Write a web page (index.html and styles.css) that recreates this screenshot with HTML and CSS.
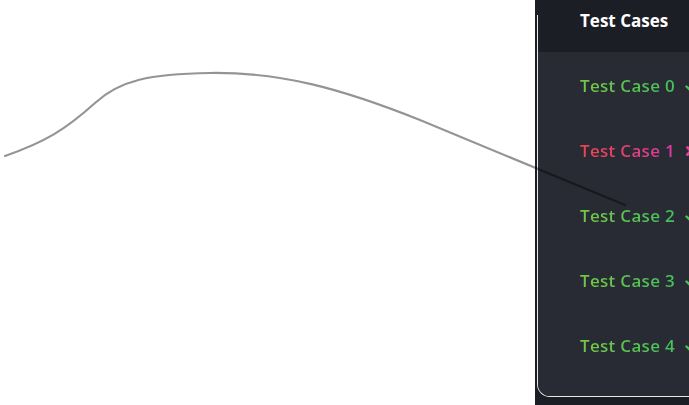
FILE: index.html
```html
<!DOCTYPE html>
<html>
<head>
<meta charset="utf-8">
<link rel="stylesheet" href="styles.css">
</head>
<body>
<div class="page">
  <div class="canvas"></div>
  <aside class="panel">
    <div class="box">
      <div class="box-head"><span class="title">Test Cases</span></div>
      <ul class="cases">
        <li class="case pass"><span class="label">Test Case 0</span><svg class="icon" viewBox="0 0 12 12"><path d="M1.5 6.5 L4.5 9.5 L10.5 2.5" fill="none" stroke="#4cc257" stroke-width="2.4" stroke-linecap="round" stroke-linejoin="round"/></svg></li>
        <li class="case fail"><span class="label">Test Case 1</span><svg class="icon" viewBox="0 0 12 12"><path d="M2.5 2.5 L9.5 9.5 M9.5 2.5 L2.5 9.5" fill="none" stroke="#e0409a" stroke-width="3" stroke-linecap="round"/></svg></li>
        <li class="case pass"><span class="label">Test Case 2</span><svg class="icon" viewBox="0 0 12 12"><path d="M1.5 6.5 L4.5 9.5 L10.5 2.5" fill="none" stroke="#4cc257" stroke-width="2.4" stroke-linecap="round" stroke-linejoin="round"/></svg></li>
        <li class="case pass"><span class="label">Test Case 3</span><svg class="icon" viewBox="0 0 12 12"><path d="M1.5 6.5 L4.5 9.5 L10.5 2.5" fill="none" stroke="#4cc257" stroke-width="2.4" stroke-linecap="round" stroke-linejoin="round"/></svg></li>
        <li class="case pass"><span class="label">Test Case 4</span><svg class="icon" viewBox="0 0 12 12"><path d="M1.5 6.5 L4.5 9.5 L10.5 2.5" fill="none" stroke="#4cc257" stroke-width="2.4" stroke-linecap="round" stroke-linejoin="round"/></svg></li>
      </ul>
    </div>
  </aside>
  <svg class="stroke" viewBox="0 0 689 405" width="689" height="405">
    <path d="M5 156 C 45 142, 65 130, 95 103 C 120 80, 150 74, 210 73 C 280 72, 340 88, 420 120 L 625 205" fill="none" stroke="rgba(0,0,0,0.42)" stroke-width="2.2" stroke-linecap="round"/>
  </svg>
</div>
</body>
</html>
```

FILE: styles.css
```css
html, body {
  margin: 0;
  padding: 0;
  background: #ffffff;
  overflow: hidden;
}
body {
  font-family: "Open Sans", "Lato", sans-serif;
}
.page {
  position: relative;
  width: 689px;
  height: 405px;
  display: flex;
  overflow: hidden;
}
.canvas {
  width: 535px;
  flex: none;
  background: #ffffff;
}
.panel {
  width: 220px;
  flex: none;
  background: #1c1e26;
  padding: 15px 0 8px 2px;
  box-sizing: border-box;
  display: flex;
}
.box {
  flex: 1;
  display: flex;
  flex-direction: column;
  border-left: 1px solid #e9e9ec;
  border-bottom: 1px solid #e9e9ec;
  border-bottom-left-radius: 13px;
}
.box-head {
  height: 37px;
  flex: none;
  background: #1c1e26;
  padding-left: 42px;
  box-sizing: border-box;
}
.title {
  display: block;
  margin-top: -4px;
  color: #ffffff;
  font-weight: 700;
  font-size: 17px;
  line-height: 20px;
  letter-spacing: 0;
}
.cases {
  list-style: none;
  margin: 0;
  padding: 0 0 0 42px;
  flex: 1;
  background: #282b33;
  border-bottom-left-radius: 12px;
}
.case {
  height: 65px;
  display: flex;
  align-items: center;
  gap: 10px;
}
.label {
  font-size: 17px;
  font-weight: 600;
  line-height: 20px;
  letter-spacing: 0.3px;
  margin-top: 2px;
  -webkit-background-clip: text;
  background-clip: text;
  color: transparent;
}
.pass .label {
  background-image: linear-gradient(90deg, #74c845, #44c05c);
}
.fail .label {
  background-image: linear-gradient(90deg, #e8474a, #db3aa3);
}
.icon {
  width: 12px;
  height: 12px;
  flex: none;
  margin-top: 2px;
}
.stroke {
  position: absolute;
  left: 0;
  top: 0;
  pointer-events: none;
}
```
